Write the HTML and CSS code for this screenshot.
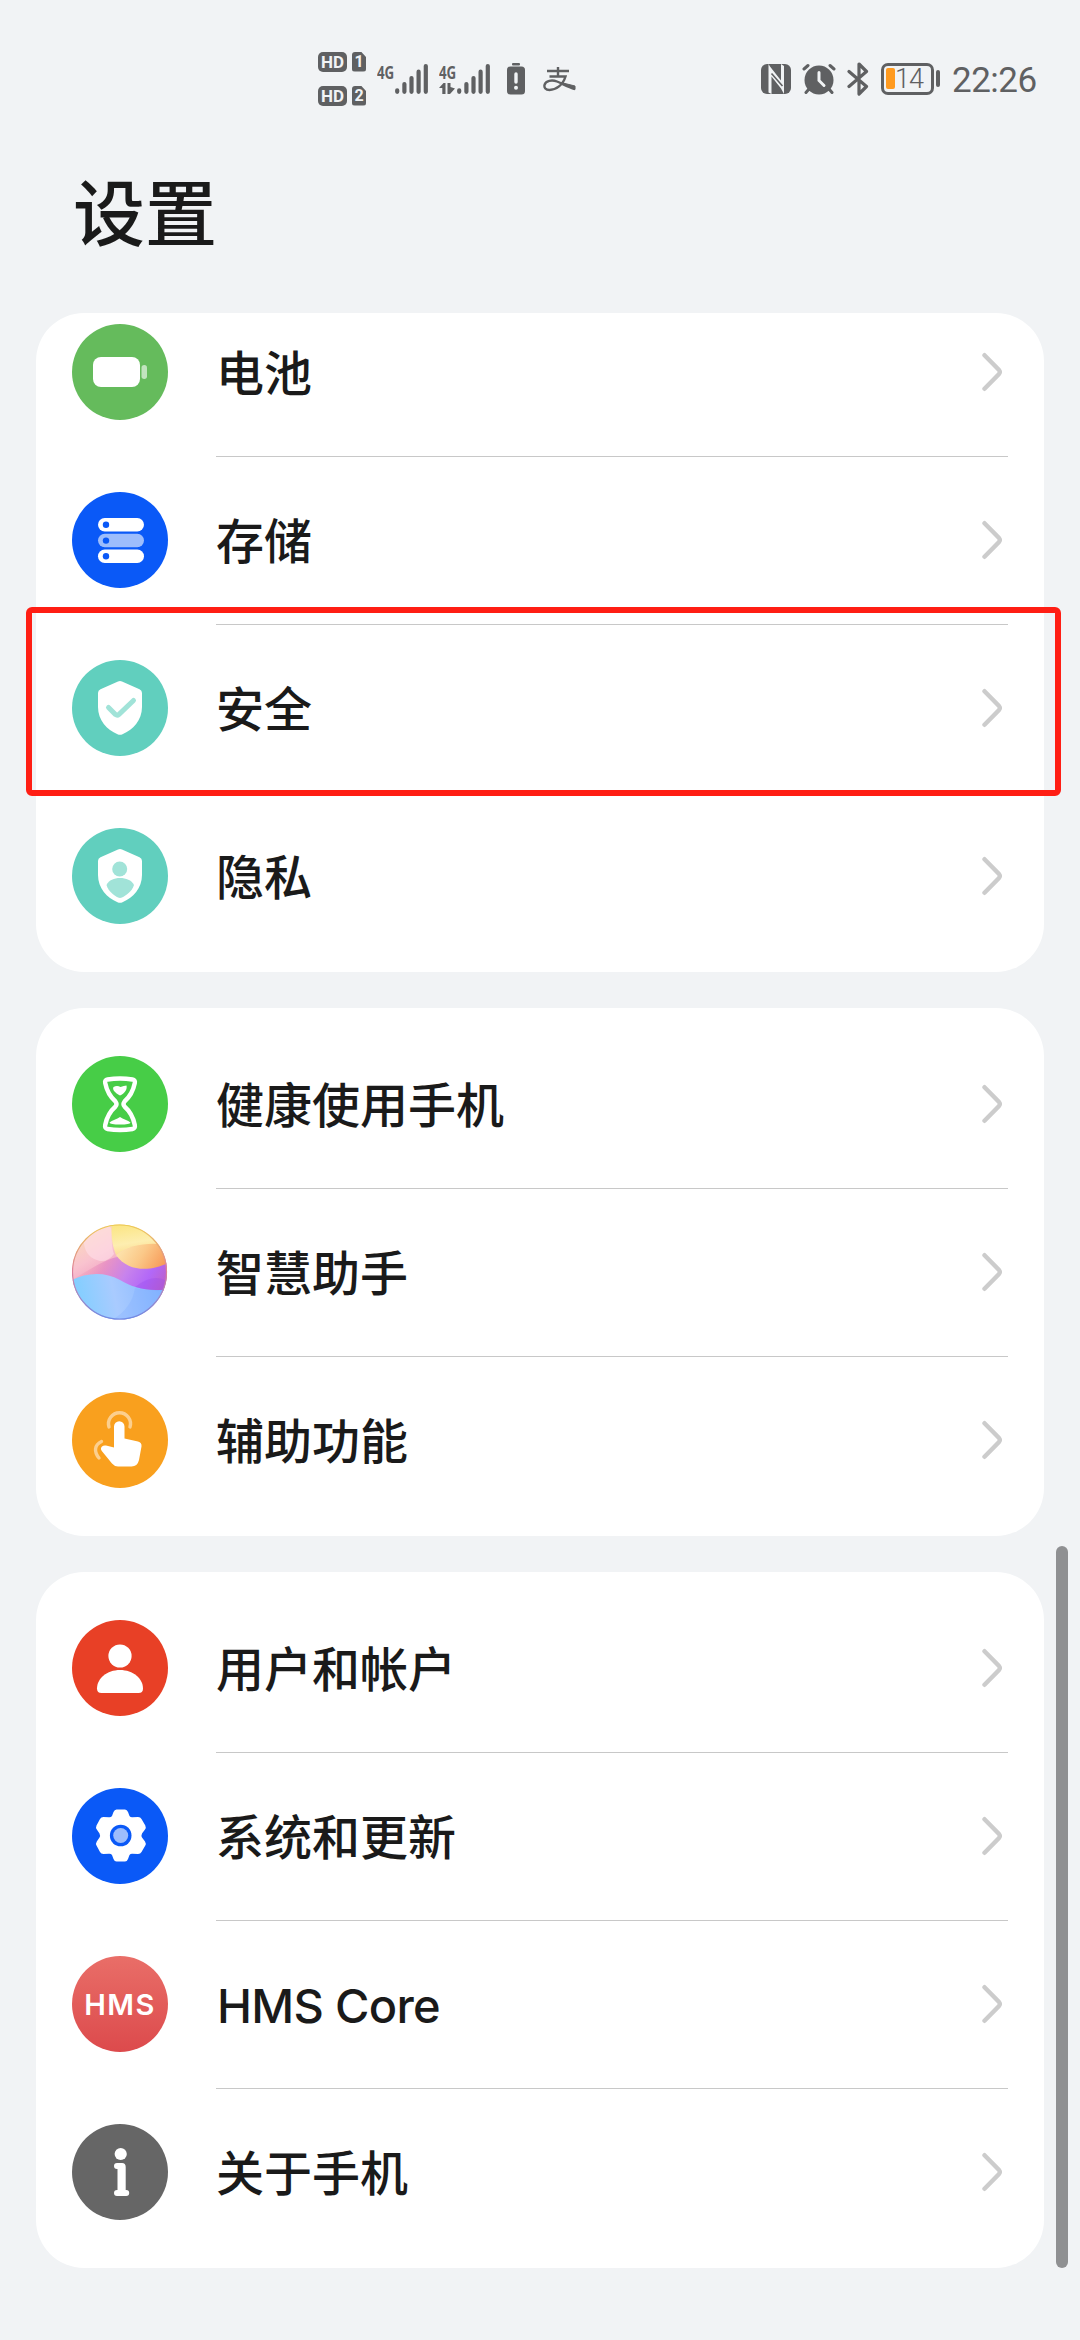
FILE: index.html
```html
<!DOCTYPE html>
<html lang="zh-CN">
<head>
    <meta charset="UTF-8">
    <meta name="viewport" content="width=device-width, initial-scale=1.0">
    <title>设置</title>
    <link rel="stylesheet" href="styles.css">
</head>
<body>
    <!-- Shared shapes -->
    <svg class="defs" width="0" height="0">
        <symbol id="chevron" viewBox="0 0 20 40">
            <path d="M2.500 3.200L17 18Q18.600 20 17 22L2.500 36.800" fill="none" stroke="#cccccc" stroke-width="4.400" stroke-linecap="round"/>
        </symbol>
        <symbol id="bars" viewBox="0 0 33 32">
            <path d="M2.200 27.300V28.800M9.400 21V28.800M16.500 15V28.800M23.600 8.700V28.800M30.800 3V28.800" stroke="#5f6062" stroke-width="4.200" stroke-linecap="round"/>
        </symbol>
        <symbol id="shield" viewBox="0 0 96 96">
            <path d="M46 21.600Q48 20.600 50 21.600L67.500 29.300Q70 30.500 70 33V47C70 60 61 70 50.500 74.200Q48 75.200 45.500 74.200C35 70 26 60 26 47V33Q26 30.500 28.500 29.300Z" fill="#fff"/>
        </symbol>
    </svg>

    <header class="status-bar">
        <div class="status-left">
            <div class="hd-group">
                <div class="hd-line"><span class="hd">HD</span><span class="sim">1</span></div>
                <div class="hd-line"><span class="hd">HD</span><span class="sim">2</span></div>
            </div>
            <div class="signal">
                <div class="net"><span>4G</span></div>
                <svg width="33" height="32"><use href="#bars"/></svg>
            </div>
            <div class="signal">
                <div class="net">
                    <span>4G</span>
                    <svg width="16" height="12" viewBox="0 0 16 12" fill="#5f6062"><path d="M0 5L4.500 0H6.500V11H3.300V5ZM8.500 0H11.500V4L16 5.500L11 11H8.500Z"/></svg>
                </div>
                <svg width="33" height="32"><use href="#bars"/></svg>
            </div>
            <svg class="batt-alert" width="18" height="32" viewBox="0 0 18 32">
                <rect x="5" y="0" width="8" height="2.500" rx="1" fill="#5f6062"/>
                <rect x="0" y="3.500" width="18" height="28" rx="3.500" fill="#5f6062"/>
                <path d="M9 11V19" stroke="#f1f3f5" stroke-width="3.400" stroke-linecap="round"/>
                <circle cx="9" cy="24.800" r="2" fill="#f1f3f5"/>
            </svg>
            <svg class="pay" width="33" height="26" viewBox="0 0 33 26" fill="none" stroke="#5f6062" stroke-width="2.400">
                <path d="M4 5H26M15 1V10M6.500 10.500H22.500C20 19 13 24 6.500 24C2.500 24 1 21.500 1.500 19C2.500 14.500 9 13.500 14 15.500C20 18 25 21 32 23"/>
                <path d="M20 17L32 20V23.500Z" fill="#5f6062" stroke-width="1"/>
            </svg>
        </div>
        <div class="status-right">
            <svg class="nfc" width="30" height="30" viewBox="0 0 30 30">
                <rect width="30" height="30" rx="6" fill="#5f6062"/>
                <path d="M7.500 0V28.500L10.500 30V12.500L20 24.500L23 30V2L20 0V16.500L9 2.500Z" fill="#f1f3f5"/>
                <path d="M10.500 9.500L21.500 22" stroke="#5f6062" stroke-width="1.600"/>
            </svg>
            <svg class="alarm" width="34" height="32" viewBox="0 0 34 32">
                <g stroke="#5f6062" stroke-width="3" stroke-linecap="round">
                    <path d="M2 6L6 2.500M32 6L28 2.500M7 26L4 29.500M27 26L30 29.500"/>
                </g>
                <circle cx="17" cy="17" r="14.500" fill="#5f6062"/>
                <path d="M17 9.500V17.500L22 22.500" fill="none" stroke="#f1f3f5" stroke-width="3" stroke-linecap="round"/>
            </svg>
            <svg class="bluetooth" width="22" height="34" viewBox="0 0 22 34">
                <path d="M2 9.500L19.500 24.500L12 32V2L19.500 9.500L2 24.500" fill="none" stroke="#5f6062" stroke-width="3.200" stroke-linecap="round" stroke-linejoin="round"/>
            </svg>
            <div class="battery"><span class="level"></span><span class="percent">14</span></div>
            <span class="battery-cap"></span>
            <span class="time">22:26</span>
        </div>
    </header>

    <h1>设置</h1>

    <main>
        <section class="card scrolled">
            <ul>
                <li>
                    <svg class="icon" viewBox="0 0 96 96">
                        <circle cx="48" cy="48" r="48" fill="#65bb5c"/>
                        <rect x="21" y="33" width="47" height="30" rx="8" fill="#fff"/>
                        <rect x="69.500" y="41" width="5.500" height="14" rx="2.700" fill="#c1e4be"/>
                    </svg>
                    <div class="row"><span>电池</span><svg class="chevron"><use href="#chevron"/></svg></div>
                </li>
                <li>
                    <svg class="icon" viewBox="0 0 96 96">
                        <circle cx="48" cy="48" r="48" fill="#0a59f7"/>
                        <rect x="26" y="26" width="46" height="13.500" rx="6.700" fill="#fff"/>
                        <rect x="26" y="41.800" width="46" height="13.500" rx="6.700" fill="#9dbdfc"/>
                        <rect x="26" y="57.500" width="46" height="13.500" rx="6.700" fill="#fff"/>
                        <g fill="#0a59f7">
                            <circle cx="34" cy="32.800" r="3.200"/>
                            <circle cx="34" cy="48.600" r="3.200"/>
                            <circle cx="34" cy="64.200" r="3.200"/>
                        </g>
                    </svg>
                    <div class="row"><span>存储</span><svg class="chevron"><use href="#chevron"/></svg></div>
                </li>
                <li class="marked">
                    <svg class="icon" viewBox="0 0 96 96">
                        <circle cx="48" cy="48" r="48" fill="#61cfbe"/>
                        <use href="#shield" width="96" height="96"/>
                        <path d="M36.500 47.500L43.500 54.500Q45.300 55.800 47 54.300L61.500 40.500" fill="none" stroke="#a1e3d8" stroke-width="5" stroke-linecap="round"/>
                    </svg>
                    <div class="row"><span>安全</span><svg class="chevron"><use href="#chevron"/></svg></div>
                </li>
                <li>
                    <svg class="icon" viewBox="0 0 96 96">
                        <circle cx="48" cy="48" r="48" fill="#61cfbe"/>
                        <use href="#shield" width="96" height="96"/>
                        <circle cx="47.700" cy="41" r="7.500" fill="#a1e3d8"/>
                        <path d="M34.500 57C37 52 42 50 48 50S59.500 52 62 57C60 63 55 67 50 69.500Q48 70.300 46 69.500C41 67 36.500 63 34.500 57Z" fill="#a1e3d8"/>
                    </svg>
                    <div class="row"><span>隐私</span><svg class="chevron"><use href="#chevron"/></svg></div>
                </li>
            </ul>
        </section>

        <section class="card">
            <ul>
                <li>
                    <svg class="icon" viewBox="0 0 96 96">
                        <circle cx="48" cy="48" r="48" fill="#47cd47"/>
                        <path d="M35.500 23.500Q48 21.500 60.500 23.500Q63.500 24 62.800 27C61 36 56.500 42 52.500 45.500Q50.500 48 52.500 50.500C56.500 54 61 60 62.800 69Q63.500 72.500 60.500 73Q48 75 35.500 73Q32.500 72.500 33.200 69C35 60 39.500 54 43.500 50.500Q45.500 48 43.500 45.500C39.500 42 35 36 33.200 27Q32.500 24 35.500 23.500Z" fill="none" stroke="#fff" stroke-width="4.400"/>
                        <path d="M48 39.500C43 37 40 33.500 41.500 31Q45 29 48.500 31Q52 29.500 54.500 29.500C55.500 33.500 52.500 37.500 48 39.500Z" fill="#fff"/>
                        <path d="M37.500 66.500C40 64 45 63.500 48 61C51 63.500 56 64 58.500 66.500Q58 68.500 48 68.500T37.500 66.500Z" fill="#fff"/>
                    </svg>
                    <div class="row"><span>健康使用手机</span><svg class="chevron"><use href="#chevron"/></svg></div>
                </li>
                <li>
                    <svg class="icon" viewBox="0 0 96 96">
                        <defs>
                            <linearGradient id="orbTop" x1="0.100" y1="0" x2="0.500" y2="0.700">
                                <stop offset="0" stop-color="#fbe0b4"/>
                                <stop offset="0.450" stop-color="#f9c3cf"/>
                                <stop offset="1" stop-color="#e884b8"/>
                            </linearGradient>
                            <linearGradient id="orbSun" x1="0.200" y1="0" x2="0.500" y2="1">
                                <stop offset="0" stop-color="#fbe583"/>
                                <stop offset="0.600" stop-color="#fdeeb0"/>
                                <stop offset="1" stop-color="#fbd98c"/>
                            </linearGradient>
                            <linearGradient id="orbHill" x1="0" y1="0.300" x2="1" y2="0.600">
                                <stop offset="0" stop-color="#fde6b0"/>
                                <stop offset="0.500" stop-color="#fbc888"/>
                                <stop offset="1" stop-color="#f79a58"/>
                            </linearGradient>
                            <linearGradient id="orbWave" x1="0" y1="0.400" x2="1" y2="0.600">
                                <stop offset="0" stop-color="#f59aa8" stop-opacity="0"/>
                                <stop offset="0.300" stop-color="#e58cc4" stop-opacity="0.800"/>
                                <stop offset="0.550" stop-color="#c883ec"/>
                                <stop offset="0.800" stop-color="#b268f8"/>
                                <stop offset="1" stop-color="#bc60cc"/>
                            </linearGradient>
                            <linearGradient id="orbSea" x1="0" y1="0.600" x2="1" y2="0.500">
                                <stop offset="0" stop-color="#7ccfff"/>
                                <stop offset="0.450" stop-color="#a9cbff"/>
                                <stop offset="1" stop-color="#83b4ff"/>
                            </linearGradient>
                            <linearGradient id="orbRim" x1="0" y1="0" x2="0" y2="1">
                                <stop offset="0" stop-color="#eccb55"/>
                                <stop offset="0.500" stop-color="#dc7f9b"/>
                                <stop offset="1" stop-color="#6f8ce6"/>
                            </linearGradient>
                            <clipPath id="orbClip"><circle cx="47.500" cy="48" r="47.500"/></clipPath>
                        </defs>
                        <g clip-path="url(#orbClip)">
                            <rect width="96" height="96" fill="url(#orbTop)"/>
                            <path d="M12 10Q38 -8 40 8Q39 22 42 30Q36 38 28 37Q14 34 12 20Z" fill="#ffdfe9" opacity="0.600"/>
                            <path d="M40 0H96V24C80 19 60 20 44 31Q38 16 40 0Z" fill="url(#orbSun)"/>
                            <path d="M0 56C20 44 36 34 46 33C66 48 82 45 96 38V68H0Z" fill="url(#orbWave)"/>
                            <path d="M44 31C58 20 78 18 96 21V39C82 46 57 50 44 31Z" fill="url(#orbHill)"/>
                            <path d="M0 56C14 49 32 47 48 56C62 64 76 68 96 65V96H0Z" fill="url(#orbSea)"/>
                            <path d="M63 63Q82 68 96 65V58Q82 48 63 63Z" fill="#9448ea" opacity="0.300"/>
                            <path d="M63 64Q82 68 96 65V96H40Q60 84 63 64Z" fill="#6fa2ff" opacity="0.200"/>
                        </g>
                        <circle cx="47.500" cy="48" r="47" fill="none" stroke="url(#orbRim)" stroke-width="1.200"/>
                    </svg>
                    <div class="row"><span>智慧助手</span><svg class="chevron"><use href="#chevron"/></svg></div>
                </li>
                <li>
                    <svg class="icon" viewBox="0 0 96 96">
                        <circle cx="48" cy="48" r="48" fill="#f9a01e"/>
                        <path d="M37 35A11 11 0 1 1 58 35M29.500 49.500C22 53 22 60 27 66" fill="none" stroke="#fccf8e" stroke-width="3.400" stroke-linecap="round"/>
                        <path d="M42 34.500A5.200 5.200 0 0 1 52.500 34.500V46.500L66 49.500Q70 50.500 69.500 54.500L67 68Q65.500 74.500 59.500 74.500H46Q42.500 74.500 40 71.500L29.800 59Q28 56.500 30 54.500Q31.500 53 34 53.500L42 55.500Z" fill="#fff"/>
                    </svg>
                    <div class="row"><span>辅助功能</span><svg class="chevron"><use href="#chevron"/></svg></div>
                </li>
            </ul>
        </section>

        <section class="card">
            <ul>
                <li>
                    <svg class="icon" viewBox="0 0 96 96">
                        <circle cx="48" cy="48" r="48" fill="#e84026"/>
                        <circle cx="48" cy="36" r="11.600" fill="#fff"/>
                        <path d="M48 50C61 50 71 58.500 71 68.500Q71 73 66.500 73H29.500Q25 73 25 68.500C25 58.500 35 50 48 50Z" fill="#fff"/>
                    </svg>
                    <div class="row"><span>用户和帐户</span><svg class="chevron"><use href="#chevron"/></svg></div>
                </li>
                <li>
                    <svg class="icon" viewBox="0 0 96 96">
                        <circle cx="48" cy="48" r="48" fill="#0a59f7"/>
                        <path d="M44.500 21.500H53Q55 21.500 56 24L57.500 28Q58.500 29.500 60.500 29.300L66 29Q68.500 29 69.500 31L73.300 37.500Q74.300 39.500 73 41.500L70 45.500Q69 47.500 70 49.500L73 53.500Q74.300 55.500 73.300 57.500L69.500 64Q68.500 66 66 66L60.500 65.700Q58.500 65.500 57.500 67L56 71Q55 73.500 53 73.500H44.500Q42.500 73.500 41.500 71L40 67Q39 65.500 37 65.700L31.500 66Q29 66 28 64L24.500 57.500Q23.500 55.500 24.800 53.500L27.500 49.500Q28.500 47.500 27.500 45.500L24.800 41.500Q23.500 39.500 24.500 37.500L28 31Q29 29 31.500 29L37 29.300Q39 29.500 40 28L41.500 24Q42.500 21.500 44.500 21.500Z" fill="#fff"/>
                        <circle cx="48.700" cy="47.500" r="10.800" fill="#0a59f7"/>
                        <circle cx="48.700" cy="47.500" r="7.500" fill="#9dbdfc"/>
                    </svg>
                    <div class="row"><span>系统和更新</span><svg class="chevron"><use href="#chevron"/></svg></div>
                </li>
                <li>
                    <div class="icon hms"><span>HMS</span></div>
                    <div class="row"><span class="latin">HMS Core</span><svg class="chevron"><use href="#chevron"/></svg></div>
                </li>
                <li>
                    <svg class="icon" viewBox="0 0 96 96">
                        <circle cx="48" cy="48" r="48" fill="#666666"/>
                        <circle cx="48.700" cy="30" r="6.100" fill="#fff"/>
                        <path d="M45 39H50Q53.700 39 53.700 43V66H54.200A3 3 0 0 1 54.200 72H45A3 3 0 0 1 45 66H45.500V45H45A3 3 0 0 1 45 39Z" fill="#fff"/>
                    </svg>
                    <div class="row"><span>关于手机</span><svg class="chevron"><use href="#chevron"/></svg></div>
                </li>
            </ul>
        </section>
    </main>

    <div class="scrollbar"></div>
</body>
</html>
```
FILE: styles.css
```css
* {
    margin: 0;
    padding: 0;
    box-sizing: border-box;
}
body {
    position: relative;
    height: 2340px;
    background-color: #f1f3f5;
    color: #1a1a1a;
    font-family: "Noto Sans CJK SC", sans-serif;
    overflow: hidden;
}
svg {
    display: block;
    flex-shrink: 0;
}
.defs {
    position: absolute;
}

/* Status bar */
.status-bar {
    height: 157px;
    padding: 0 44px 0 318px;
    display: flex;
    justify-content: space-between;
    align-items: center;
    color: #5f6062;
    font-family: Roboto, sans-serif;
}
.status-left, .status-right {
    display: flex;
    align-items: center;
}
.hd-group {
    display: flex;
    flex-direction: column;
    gap: 14px;
}
.hd-line {
    display: flex;
    gap: 5px;
}
.hd, .sim {
    height: 20px;
    line-height: 20px;
    background-color: #5f6062;
    color: #f1f3f5;
    text-align: center;
    font-weight: 700;
}
.hd {
    width: 29px;
    border-radius: 5px;
    font-size: 17px;
}
.sim {
    width: 14px;
    border-radius: 3px;
    font-size: 16px;
    clip-path: polygon(0 0, 64% 0, 100% 28%, 100% 100%, 0 100%);
}
.signal {
    display: flex;
    margin-left: 11px;
}
.net {
    width: 18px;
    height: 32px;
}
.net span {
    display: block;
    font-family: "Open Sans", sans-serif;
    font-size: 18px;
    font-weight: 700;
    line-height: 18px;
    transform: scaleX(0.74);
    transform-origin: left;
}
.net svg {
    margin-top: 2px;
}
.batt-alert {
    margin-left: 17px;
}
.pay {
    margin-left: 18px;
}
.alarm {
    margin-left: 11px;
}
.bluetooth {
    margin-left: 11px;
}
.battery {
    width: 53px;
    height: 32px;
    margin-left: 12px;
    padding-left: 2px;
    display: flex;
    align-items: center;
    border: 3px solid #5f6062;
    border-radius: 7px;
}
.level {
    width: 9px;
    height: 21px;
    border-radius: 2px;
    background-color: #ff9a1f;
}
.percent {
    font-size: 27px;
    font-weight: 300;
    letter-spacing: -1px;
    line-height: 26px;
}
.battery-cap {
    width: 4px;
    height: 17px;
    margin-left: 2px;
    border-radius: 2px;
    background-color: #5f6062;
}
.time {
    width: 84px;
    margin-left: 12px;
    padding-top: 4px;
    font-size: 35px;
    letter-spacing: -0.5px;
    line-height: 40px;
    white-space: nowrap;
}

h1 {
    height: 156px;
    padding-left: 73px;
    font-size: 72px;
    font-weight: 500;
    line-height: 103px;
}

/* Setting groups */
main {
    padding: 0 36px;
    display: flex;
    flex-direction: column;
    gap: 36px;
}
.card {
    padding: 12px 0;
    border-radius: 48px;
    background-color: #fff;
}
.card ul {
    list-style: none;
}
/* first group is partly scrolled under the title */
.card.scrolled {
    padding-top: 0;
}
.card.scrolled ul {
    margin-top: -25px;
}
.card li {
    position: relative;
    height: 168px;
    padding: 0 36px;
    display: flex;
    align-items: center;
    gap: 48px;
}
.icon {
    width: 96px;
    height: 96px;
    flex-shrink: 0;
}
.row {
    flex: 1;
    height: 100%;
    padding-right: 6px;
    display: flex;
    justify-content: space-between;
    align-items: center;
}
.row span {
    padding-bottom: 4px;
    font-size: 48px;
    font-weight: 500;
    line-height: 70px;
}
.row .latin {
    padding: 4px 0 0 1px;
    font-family: Inter, sans-serif;
    font-size: 47px;
    letter-spacing: -0.7px;
}
li + li .row {
    box-shadow: inset 0 1px #c8c8c8;
}
.chevron {
    width: 20px;
    height: 40px;
}
.hms {
    display: flex;
    justify-content: center;
    align-items: center;
    border-radius: 50%;
    background: linear-gradient(#e96e68, #dc4a4c);
    color: #fff;
}
.hms span {
    font-family: Inter, sans-serif;
    font-size: 29px;
    font-weight: 600;
    letter-spacing: 1.5px;
}

/* Red frame around the security entry */
.marked::after {
    content: "";
    box-sizing: border-box;
    position: absolute;
    top: -17px;
    left: -10px;
    width: 1035px;
    height: 189px;
    border: 6px solid #ff1e14;
    border-radius: 6px;
    z-index: 1;
}
.scrollbar {
    position: absolute;
    top: 1546px;
    right: 12px;
    width: 12px;
    height: 722px;
    border-radius: 6px;
    background-color: #8f9092;
}
```
